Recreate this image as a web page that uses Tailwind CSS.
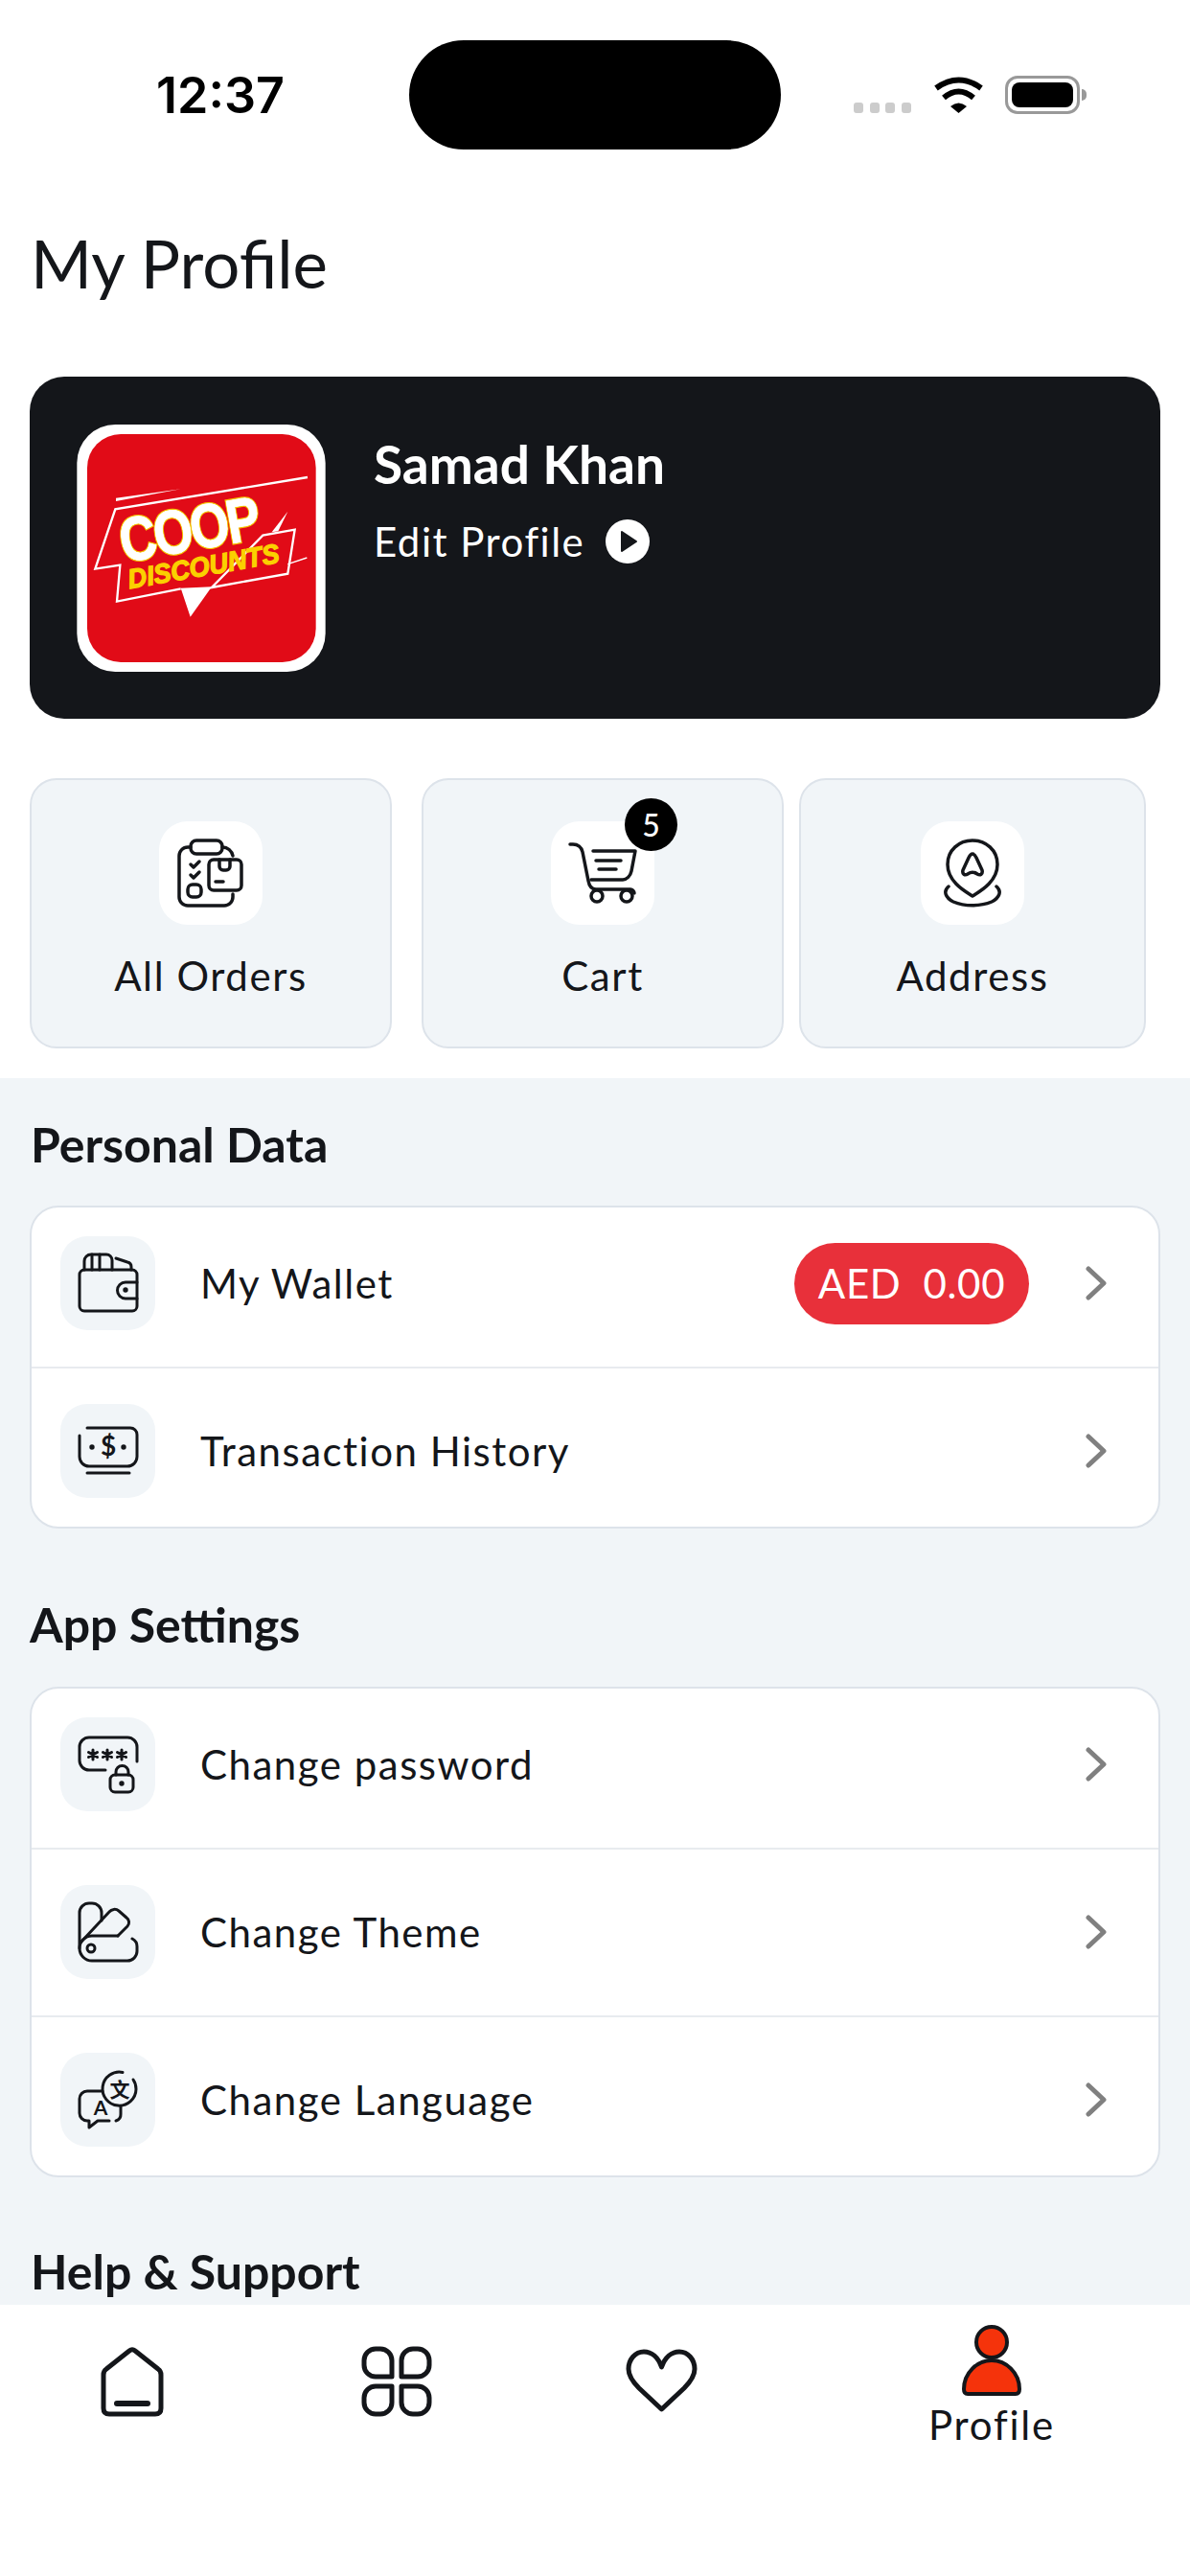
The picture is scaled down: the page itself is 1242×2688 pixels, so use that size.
<!DOCTYPE html>
<html lang="en">
<head>
    <meta charset="UTF-8">
    <meta name="viewport" content="width=device-width, initial-scale=1.0">
    <title>My Profile</title>
    <script src="https://cdn.jsdelivr.net/npm/@tailwindcss/browser@4"></script>
</head>
<body class="bg-white">
    <div class="flex flex-col w-[1242px] h-[2688px] overflow-hidden bg-white text-[#14161a] font-[family-name:Lato,sans-serif]">

        <!-- Status bar -->
        <div class="flex items-center shrink-0 h-[114px] mt-[42px] pl-[163px]">
            <span class="w-[135px] mr-[129px] pt-[2px] font-[family-name:Inter,sans-serif] font-semibold text-[52px] leading-none tracking-[0px] text-black whitespace-nowrap">12:37</span>
            <div class="w-[388px] h-[114px] rounded-full bg-black"></div>
            <div class="flex items-end h-[40px] ml-[76px]">
                <div class="flex gap-[6.5px] mb-[1px]">
                    <span class="w-[10px] h-[11px] rounded-[3px] bg-[#cccccc]"></span>
                    <span class="w-[10px] h-[11px] rounded-[3px] bg-[#cccccc]"></span>
                    <span class="w-[10px] h-[11px] rounded-[3px] bg-[#cccccc]"></span>
                    <span class="w-[10px] h-[11px] rounded-[3px] bg-[#cccccc]"></span>
                </div>
                <svg class="ml-[23px] mb-[1px]" width="53" height="38" viewBox="0 0 53 38" fill="none">
                    <path d="M3 12 Q26.5 -5 50 12" stroke="#000" stroke-width="6"/>
                    <path d="M11 22 Q26.5 9 42 22" stroke="#000" stroke-width="6"/>
                    <path d="M18 31 Q26.5 24 35 31 L26.5 38Z" fill="#000"/>
                </svg>
                <div class="flex items-center ml-[22px]">
                    <div class="flex w-[78px] h-[40px] p-[4px] rounded-[13px] border-[3px] border-[#999999]">
                        <div class="flex-1 rounded-[8px] bg-black"></div>
                    </div>
                    <div class="w-[5px] h-[12px] ml-[2px] rounded-r-full bg-[#999999]"></div>
                </div>
            </div>
        </div>

        <h1 class="shrink-0 mt-[79px] ml-[32px] text-[69px] leading-[80px] font-normal">My Profile</h1>

        <!-- Profile card -->
        <div class="flex shrink-0 h-[357px] mt-[78px] mx-[31px] pl-[49px] pt-[50px] rounded-[36px] bg-[#14161a]">
            <svg class="shrink-0" width="260" height="258" viewBox="30 38 778 774">
                <rect x="30" y="38" width="778" height="774" rx="120" fill="#fff"/>
                <rect x="62" y="68" width="716" height="714" rx="105" fill="#e10b17"/>
                <path d="M152 268 L355 240 L152 278Z" fill="#fff"/>
                <path d="M752 203 L150 303 L87 490 L165 478 L155 592 L355 552 M452 548 L690 505 L712 367 L612 385 Z" fill="none" stroke="#fff" stroke-width="7"/>
                <path d="M690 475 L750 455" stroke="#fff" stroke-width="4"/>
                <path d="M640 375 L690 310 L660 372Z" fill="#fff"/>
                <path d="M355 550 L452 546 L385 640Z" fill="#fff"/>
                <text transform="translate(176 470) rotate(-10) scale(.88 1.08)" textLength="505" font-family="Liberation Sans" font-weight="700" font-size="180" fill="#fff" stroke="#f5c400" stroke-width="9" paint-order="stroke">COOP</text>
                <text transform="translate(176 470) rotate(-10) scale(.88 1.08)" textLength="505" font-family="Liberation Sans" font-weight="700" font-size="180" fill="#fff" stroke="#fff" stroke-width="2">COOP</text>
                <text x="195" y="552" textLength="480" lengthAdjust="spacingAndGlyphs" transform="rotate(-10 195 552)" font-family="Liberation Sans" font-weight="700" font-style="italic" font-size="85" fill="#fbd000" stroke="#fbd000" stroke-width="4">DISCOUNTS</text>
            </svg>
            <div class="ml-[50px] pt-[9px]">
                <p class="text-[55px] leading-[64px] font-bold text-white">Samad Khan</p>
                <div class="flex items-center mt-[23px]">
                    <span class="text-[42px] leading-[52px] tracking-[1.5px] text-white">Edit Profile</span>
                    <svg class="ml-[22px]" width="46" height="46" viewBox="0 0 46 46">
                        <circle cx="23" cy="23" r="23" fill="#fff"/>
                        <path d="M17 13 L32 23 L17 33Z" fill="#14161a" stroke="#14161a" stroke-width="2" stroke-linejoin="round"/>
                    </svg>
                </div>
            </div>
        </div>

        <!-- Quick actions -->
        <div class="flex shrink-0 h-[282px] mt-[62px] ml-[31px]">
            <div class="flex flex-col items-center w-[378px] pt-[43px] rounded-[28px] border-2 border-[#dde3ea] bg-[#f1f5f8]">
                <div class="flex items-center justify-center w-[108px] h-[108px] rounded-[30px] bg-white">
                    <svg width="72" height="72" viewBox="0 0 72 72" fill="none" stroke="#14161a" stroke-width="3.5" stroke-linecap="round" stroke-linejoin="round">
                        <path d="M15 9 H12 A9 9 0 0 0 3 18 V61 A9 9 0 0 0 12 70 H50 A9 9 0 0 0 59 61 V58"/>
                        <path d="M48 9 A11 11 0 0 1 59 18"/>
                        <rect x="15" y="2" width="33" height="14" rx="6"/>
                        <rect x="34" y="22" width="34" height="32" rx="5"/>
                        <path d="M45 22 V29 A4 4 0 0 0 49 33 H52 A4 4 0 0 0 56 29 V22"/>
                        <path d="M41 45 H49"/>
                        <path d="M15 27 L18 30 L24 24"/>
                        <path d="M15 38 L18 41 L24 35"/>
                        <rect x="12" y="48" width="14" height="13" rx="5"/>
                    </svg>
                </div>
                <span class="mt-[27px] text-[42px] leading-[52px] tracking-[1.6px]">All Orders</span>
            </div>
            <div class="flex flex-col items-center w-[378px] ml-[31px] pt-[43px] rounded-[28px] border-2 border-[#dde3ea] bg-[#f1f5f8]">
                <div class="relative w-[108px] h-[108px] rounded-[30px] bg-white">
                    <svg width="108" height="108" viewBox="0 0 108 108" fill="none" stroke="#14161a" stroke-width="3.5" stroke-linecap="round" stroke-linejoin="round">
                        <path d="M20 24 H23 C28 24 32 27 33 32 L39 62 C40 68 42 71 47 71 H83 C85 71 87 73 87 75"/>
                        <path d="M44 31 H88 L84 52 C83 57 79 61 75 61 H42"/>
                        <path d="M47 41 H73"/>
                        <path d="M50 50 H68"/>
                        <circle cx="48" cy="78" r="6"/>
                        <circle cx="79" cy="78" r="6"/>
                    </svg>
                    <span class="absolute -top-[24px] left-[77px] flex items-center justify-center w-[55px] h-[55px] rounded-full bg-black text-[32px] font-medium text-white">5</span>
                </div>
                <span class="mt-[27px] text-[42px] leading-[52px] tracking-[1.6px]">Cart</span>
            </div>
            <div class="flex flex-col items-center w-[362px] ml-[16px] pt-[43px] rounded-[28px] border-2 border-[#dde3ea] bg-[#f1f5f8]">
                <div class="flex items-center justify-center w-[108px] h-[108px] rounded-[30px] bg-white">
                    <svg width="72" height="72" viewBox="0 0 72 72" fill="none" stroke="#14161a" stroke-width="3.5" stroke-linecap="round" stroke-linejoin="round">
                        <path d="M36 60 C42 56 62 46 62 27 C62 12 50 2 36 2 C22 2 10 12 10 27 C10 46 30 56 36 60Z"/>
                        <path d="M36 16 C38 16 39 18 40 20 L46 33 C47 37 44 39 41 37 C38 35 34 35 31 37 C28 39 25 37 26 33 L32 20 C33 18 34 16 36 16Z"/>
                        <path d="M11 50 C5 55 8 62 16 66 C28 71 44 71 56 66 C64 62 67 55 61 50"/>
                    </svg>
                </div>
                <span class="mt-[27px] text-[42px] leading-[52px] tracking-[1.6px]">Address</span>
            </div>
        </div>

        <!-- Scrolling content, cut off by the tab bar -->
        <div class="flex-1 min-h-0 mt-[31px] overflow-hidden bg-[#f1f5f8] pt-[41px]">
            <h2 class="ml-[32px] text-[50px] leading-[56px] font-bold">Personal Data</h2>
            <div class="flex flex-col mt-[36px] mx-[31px] py-[30px] rounded-[30px] border-2 border-[#dde3ea] bg-white">
                <div class="flex items-center h-[98px] pl-[30px] pr-[51px]">
                    <div class="flex items-center justify-center shrink-0 w-[99px] h-[98px] rounded-[28px] bg-[#f1f5f8]">
                        <svg width="64" height="64" viewBox="0 0 64 64" fill="none" stroke="#14161a" stroke-width="3" stroke-linecap="round" stroke-linejoin="round">
                            <path d="M7 18 H57 A5 5 0 0 1 62 23 V56 A5 5 0 0 1 57 61 H7 A5 5 0 0 1 2 56 V23 A5 5 0 0 1 7 18Z"/>
                            <path d="M62 31 H50 A8.5 8.5 0 0 0 50 48 H62"/>
                            <circle cx="50" cy="39" r="1.2" fill="#14161a"/>
                            <path d="M7 18 V9 A7 7 0 0 1 14 2 H30 A6 6 0 0 1 36 8 V18"/>
                            <path d="M15 2 V18 M23 2 V18"/>
                            <path d="M40 6 L52 10 A5 5 0 0 1 56 15 V18"/>
                        </svg>
                    </div>
                    <span class="ml-[47px] text-[42px] leading-[52px] tracking-[1.5px]">My Wallet</span>
                    <span class="ml-auto flex items-center justify-center w-[245px] h-[85px] rounded-full bg-[#e8303a] text-[42px] tracking-[0.7px] text-white whitespace-pre">AED  0.00</span>
                    <svg class="ml-[58px]" width="26" height="36" viewBox="0 0 26 36" fill="none" stroke="#808080" stroke-width="5" stroke-linecap="round" stroke-linejoin="round"><path d="M4 3 L20 18 L4 33"/></svg>
                </div>
                <div class="h-[2px] my-[37.5px] bg-[#e8ebef]"></div>
                <div class="flex items-center h-[98px] pl-[30px] pr-[51px]">
                    <div class="flex items-center justify-center shrink-0 w-[99px] h-[98px] rounded-[28px] bg-[#f1f5f8]">
                        <svg width="64" height="64" viewBox="0 0 64 64" fill="none" stroke="#14161a" stroke-width="3" stroke-linecap="round" stroke-linejoin="round">
                            <path d="M10 8 H55 A7 7 0 0 1 62 15 V38 A10 10 0 0 1 52 48 H12 A10 10 0 0 1 2 38 V16"/>
                            <path d="M10 55 H54"/>
                            <circle cx="15" cy="28" r="1.2" fill="#14161a"/>
                            <circle cx="48" cy="28" r="1.2" fill="#14161a"/>
                            <text x="32" y="37" text-anchor="middle" font-family="Lato" font-weight="700" font-size="28" fill="#14161a" stroke="none">$</text>
                        </svg>
                    </div>
                    <span class="ml-[47px] text-[42px] leading-[52px] tracking-[1.5px]">Transaction History</span>
                    <svg class="ml-auto" width="26" height="36" viewBox="0 0 26 36" fill="none" stroke="#808080" stroke-width="5" stroke-linecap="round" stroke-linejoin="round"><path d="M4 3 L20 18 L4 33"/></svg>
                </div>
            </div>

            <h2 class="mt-[72px] ml-[31px] text-[50px] leading-[56px] font-bold">App Settings</h2>
            <div class="flex flex-col mt-[37px] mx-[31px] py-[30px] rounded-[30px] border-2 border-[#dde3ea] bg-white">
                <div class="flex items-center h-[98px] pl-[30px] pr-[51px]">
                    <div class="flex items-center justify-center shrink-0 w-[99px] h-[98px] rounded-[28px] bg-[#f1f5f8]">
                        <svg width="64" height="64" viewBox="0 0 64 64" fill="none" stroke="#14161a" stroke-width="3" stroke-linecap="round" stroke-linejoin="round">
                            <path d="M62 29 V14 A10 10 0 0 0 52 4 H12 A10 10 0 0 0 2 14 V28 A10 10 0 0 0 12 38 H29"/>
                            <path d="M16 17 V27 M11.5 19.5 L20.5 24.5 M20.5 19.5 L11.5 24.5"/>
                            <path d="M31 17 V27 M26.5 19.5 L35.5 24.5 M35.5 19.5 L26.5 24.5"/>
                            <path d="M46 17 V27 M41.5 19.5 L50.5 24.5 M50.5 19.5 L41.5 24.5"/>
                            <rect x="34" y="43" width="24" height="18" rx="5"/>
                            <path d="M40 43 V40 A6.5 6.5 0 0 1 53 40 V43"/>
                            <circle cx="46" cy="52" r="1.2" fill="#14161a"/>
                        </svg>
                    </div>
                    <span class="ml-[47px] text-[42px] leading-[52px] tracking-[1.5px]">Change password</span>
                    <svg class="ml-auto" width="26" height="36" viewBox="0 0 26 36" fill="none" stroke="#808080" stroke-width="5" stroke-linecap="round" stroke-linejoin="round"><path d="M4 3 L20 18 L4 33"/></svg>
                </div>
                <div class="h-[2px] my-[37.5px] bg-[#e8ebef]"></div>
                <div class="flex items-center h-[98px] pl-[30px] pr-[51px]">
                    <div class="flex items-center justify-center shrink-0 w-[99px] h-[98px] rounded-[28px] bg-[#f1f5f8]">
                        <svg width="64" height="64" viewBox="0 0 64 64" fill="none" stroke="#14161a" stroke-width="3" stroke-linecap="round" stroke-linejoin="round">
                            <path d="M2 49 V12 A10 10 0 0 1 12 2 H15 A10 10 0 0 1 25 12 V20"/>
                            <path d="M4 42 L33 11 A7 7 0 0 1 43 10 L51 17 A6 6 0 0 1 52 26 L42 36"/>
                            <path d="M42 36 H15 A13 13 0 0 0 15 62 H52 A10 10 0 0 0 62 52 V47 A9 9 0 0 0 57 39"/>
                            <circle cx="14" cy="49" r="4"/>
                        </svg>
                    </div>
                    <span class="ml-[47px] text-[42px] leading-[52px] tracking-[1.5px]">Change Theme</span>
                    <svg class="ml-auto" width="26" height="36" viewBox="0 0 26 36" fill="none" stroke="#808080" stroke-width="5" stroke-linecap="round" stroke-linejoin="round"><path d="M4 3 L20 18 L4 33"/></svg>
                </div>
                <div class="h-[2px] my-[37.5px] bg-[#e8ebef]"></div>
                <div class="flex items-center h-[98px] pl-[30px] pr-[51px]">
                    <div class="flex items-center justify-center shrink-0 w-[99px] h-[98px] rounded-[28px] bg-[#f1f5f8]">
                        <svg width="64" height="64" viewBox="0 0 64 64" fill="none" stroke="#14161a" stroke-width="3" stroke-linecap="round" stroke-linejoin="round">
                            <path d="M47 3.5 A17.5 17.5 0 1 0 61 21 A17 17 0 0 0 58 11"/>
                            <path d="M26 23 H10 A8 8 0 0 0 2 31 V46 A8 8 0 0 0 10 54 H12 V61 L21 54 H33"/>
                            <path d="M45 39 V47 A7 7 0 0 1 40 54"/>
                            <text x="44" y="29" text-anchor="middle" font-family="Noto Sans CJK SC" font-size="21" font-weight="700" fill="#14161a" stroke="none">文</text>
                            <text x="24" y="48" text-anchor="middle" font-family="Lato" font-size="21" font-weight="700" fill="#14161a" stroke="none">A</text>
                        </svg>
                    </div>
                    <span class="ml-[47px] text-[42px] leading-[52px] tracking-[1.5px]">Change Language</span>
                    <svg class="ml-auto" width="26" height="36" viewBox="0 0 26 36" fill="none" stroke="#808080" stroke-width="5" stroke-linecap="round" stroke-linejoin="round"><path d="M4 3 L20 18 L4 33"/></svg>
                </div>
            </div>

            <h2 class="mt-[70px] ml-[32px] text-[50px] leading-[56px] font-bold">Help &amp; Support</h2>
        </div>

        <!-- Tab bar -->
        <div class="flex shrink-0 h-[283px] bg-white">
            <div class="flex justify-center w-[276px] pt-[40px]">
                <svg width="80" height="80" viewBox="0 0 80 80" fill="none" stroke="#14161a" stroke-width="5" stroke-linecap="round" stroke-linejoin="round">
                    <path d="M10 33 Q10 29 13 27 L37 8 Q40 5.5 43 8 L67 27 Q70 29 70 33 V68 Q70 74 64 74 H16 Q10 74 10 68 Z"/>
                    <path d="M24 63 H56" stroke-width="6"/>
                </svg>
            </div>
            <div class="flex justify-center w-[276px] pt-[40px]">
                <svg width="80" height="80" viewBox="0 0 80 80" fill="none" stroke="#14161a" stroke-width="5" stroke-linejoin="round">
                    <path d="M18 6 H23 A12 12 0 0 1 35 18 V35 H18 A12 12 0 0 1 6 23 V18 A12 12 0 0 1 18 6Z"/>
                    <path d="M57 6 H62 A12 12 0 0 1 74 18 V23 A12 12 0 0 1 62 35 H45 V18 A12 12 0 0 1 57 6Z"/>
                    <path d="M18 45 H35 V62 A12 12 0 0 1 23 74 H18 A12 12 0 0 1 6 62 V57 A12 12 0 0 1 18 45Z"/>
                    <path d="M45 45 H62 A12 12 0 0 1 74 57 V62 A12 12 0 0 1 62 74 H57 A12 12 0 0 1 45 62 Z"/>
                </svg>
            </div>
            <div class="flex justify-center w-[276px] pt-[40px]">
                <svg width="80" height="80" viewBox="0 0 80 80" fill="none" stroke="#14161a" stroke-width="5" stroke-linejoin="round">
                    <path d="M40.5 25 C37 15 30 9 22 9 C13 9 6 17 6 27 C6 35 11 41 17 47 L40.5 69 L64 47 C70 41 75 35 75 27 C75 17 68 9 59 9 C51 9 44 15 40.5 25Z"/>
                </svg>
            </div>
            <div class="flex flex-1 flex-col items-center pt-[19px]">
                <svg width="70" height="80" viewBox="0 0 70 80" fill="#f5330b" stroke="#14161a" stroke-width="4" stroke-linejoin="round">
                    <circle cx="35" cy="20" r="16"/>
                    <path d="M10 74 H60 Q64 74 64 69 C64 52 50 39 35 39 C20 39 6 52 6 69 Q6 74 10 74Z"/>
                </svg>
                <span class="mt-[1px] text-[42px] leading-[50px] tracking-[1.8px]">Profile</span>
            </div>
        </div>
    </div>
</body>
</html>
